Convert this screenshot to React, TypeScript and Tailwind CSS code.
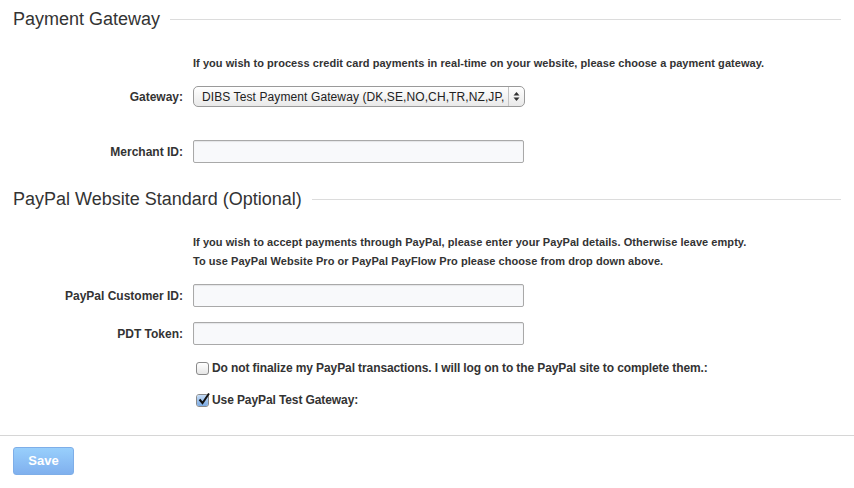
const font = { fontFamily: '"Liberation Sans", Arial, sans-serif' };

function SectionTitle({ title }: { title: string }) {
  return (
    <div className="flex h-[38px] items-center">
      <h2 className="text-[18px] leading-none text-[#333]">{title}</h2>
      <div className="ml-[10px] h-px flex-1 bg-[#dcdcdc]" />
    </div>
  );
}

function Row({ label, children, className = "" }: { label: string; children: React.ReactNode; className?: string }) {
  return (
    <div className={`flex items-center ${className}`}>
      <label className="w-[170px] pr-0 text-right text-[12px] font-bold text-[#333]">{label}</label>
      <div className="ml-[10px]">{children}</div>
    </div>
  );
}

function TextInput() {
  return (
    <div className="h-[23px] w-[331px] rounded-[2px] border border-[#a9a9a9] bg-[#f8f9fb] shadow-[inset_0_1px_1px_rgba(0,0,0,0.08)]" />
  );
}

function FakeSelect() {
  return (
    <div className="flex h-[21px] w-[332px] items-center rounded-[5px] border border-[#9a9a9a] bg-gradient-to-b from-white to-[#e9e9e9] text-[12px] text-[#222]">
      <span className="flex-1 truncate pl-[8px] tracking-[0.1px]">DIBS Test Payment Gateway (DK,SE,NO,CH,TR,NZ,JP,</span>
      <span className="flex h-full w-[16px] items-center justify-center border-l border-[#c4c4c4]">
        <svg width="7" height="11" viewBox="0 0 7 11">
          <path d="M3.5 1 L6.5 4.5 H0.5 Z" fill="#333" />
          <path d="M3.5 10 L6.5 6.5 H0.5 Z" fill="#333" />
        </svg>
      </span>
    </div>
  );
}

function Checkbox({ checked }: { checked?: boolean }) {
  return (
    <span className="relative mr-[3px] inline-block h-[13px] w-[13px] rounded-[3px] border border-[#8a8a8a] bg-gradient-to-b from-white to-[#e6e6e6]">
      {checked && (
        <>
          <span className="absolute inset-0 rounded-[2px] bg-gradient-to-b from-[#c5dcf6] to-[#7aaae3]" />
          <svg className="absolute left-[0px] top-[-3px]" width="14" height="14" viewBox="0 0 14 14">
            <path d="M2.5 7.5 L5.5 11 L12 1.5" fill="none" stroke="#111" strokeWidth="2" />
          </svg>
        </>
      )}
    </span>
  );
}

export default function App() {
  return (
    <div className="min-h-[488px] w-full bg-white" style={font}>
      <div className="px-[13px]">
        <SectionTitle title="Payment Gateway" />
        <p className="ml-[180px] mt-[17px] text-[11px] font-bold leading-[16px] tracking-[0.05px] text-[#333]">
          If you wish to process credit card payments in real-time on your website, please choose a payment gateway.
        </p>
        <Row label="Gateway:" className="mt-[15px]">
          <FakeSelect />
        </Row>
        <Row label="Merchant ID:" className="mt-[33px]">
          <TextInput />
        </Row>

        <div className="mt-[17px]">
          <SectionTitle title="PayPal Website Standard (Optional)" />
        </div>
        <p className="ml-[180px] mt-[15px] text-[11px] font-bold leading-[19px] tracking-[0.05px] text-[#333]">
          If you wish to accept payments through PayPal, please enter your PayPal details. Otherwise leave empty.
          <br />
          To use PayPal Website Pro or PayPal PayFlow Pro please choose from drop down above.
        </p>
        <Row label="PayPal Customer ID:" className="mt-[13px]">
          <TextInput />
        </Row>
        <Row label="PDT Token:" className="mt-[15px]">
          <TextInput />
        </Row>
        <div className="ml-[183px] mt-[15px] flex h-[16px] items-center text-[12px] font-bold tracking-[-0.1px] text-[#333]">
          <Checkbox />
          Do not finalize my PayPal transactions. I will log on to the PayPal site to complete them.:
        </div>
        <div className="ml-[183px] mt-[16px] flex h-[16px] items-center text-[12px] font-bold tracking-[-0.1px] text-[#333]">
          <Checkbox checked />
          Use PayPal Test Gateway:
        </div>
      </div>

      <div className="mt-[27px] h-px w-full bg-[#d6d6d6]" />
      <div className="px-[13px] pt-[11px]">
        <button className="h-[28px] w-[61px] rounded-[3px] border border-[#7eaee8] bg-gradient-to-b from-[#98cffc] to-[#80b0ee] text-[13px] font-bold text-white">
          Save
        </button>
      </div>
    </div>
  );
}
